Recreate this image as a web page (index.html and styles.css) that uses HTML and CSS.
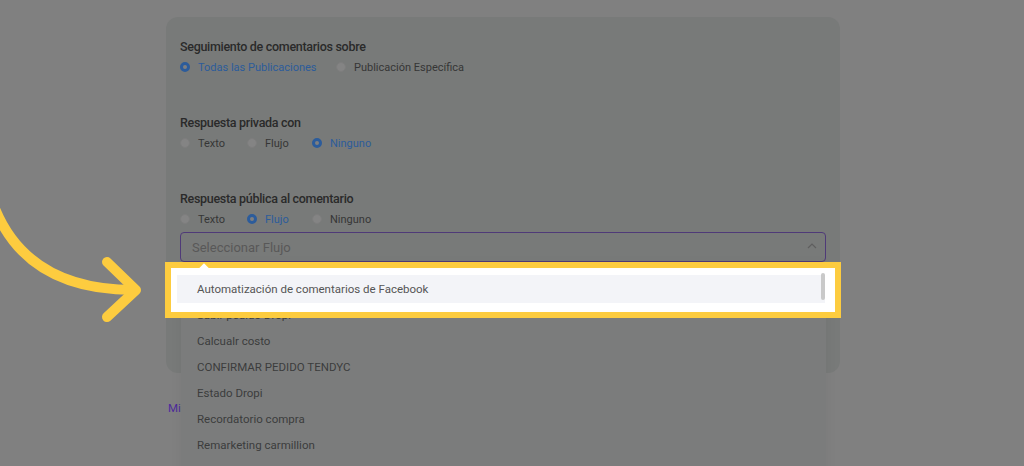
FILE: index.html
```html
<!DOCTYPE html>
<html lang="es">

<head>
    <meta charset="UTF-8">
    <meta name="viewport" content="width=device-width, initial-scale=1.0">
    <title>Respuesta a comentarios</title>
    <link rel="stylesheet" href="styles.css">
</head>

<body>
    <div class="comment-form">
        <div class="form-group">
            <div class="group-title">Seguimiento de comentarios sobre</div>
            <div class="radio-row">
                <span class="radio checked"><i></i>Todas las Publicaciones</span>
                <span class="radio wide"><i></i>Publicación Específica</span>
            </div>
        </div>

        <div class="form-group">
            <div class="group-title">Respuesta privada con</div>
            <div class="radio-row">
                <span class="radio"><i></i>Texto</span>
                <span class="radio"><i></i>Flujo</span>
                <span class="radio checked"><i></i>Ninguno</span>
            </div>
        </div>

        <div class="form-group last">
            <div class="group-title">Respuesta pública al comentario</div>
            <div class="radio-row">
                <span class="radio"><i></i>Texto</span>
                <span class="radio checked"><i></i>Flujo</span>
                <span class="radio"><i></i>Ninguno</span>
            </div>

            <div class="select-wrap">
                <div class="select-box">
                    <span>Seleccionar Flujo</span>
                    <svg class="chevron" width="10" height="6" viewBox="0 0 10 6">
                        <path d="M1 5 L5 1 L9 5" fill="none" stroke="#5f5f5f" stroke-width="1.2" />
                    </svg>
                </div>

                <ul class="flow-menu">
                    <li>Automatización de comentarios de Facebook</li>
                    <li>Subir pedido Dropi</li>
                    <li>Calcualr costo</li>
                    <li>CONFIRMAR PEDIDO TENDYC</li>
                    <li>Estado Dropi</li>
                    <li>Recordatorio compra</li>
                    <li>Remarketing carmillion</li>
                </ul>
            </div>
        </div>
    </div>

    <a href="#" class="flows-link">Mis flujos</a>

    <!-- tutorial highlight over the first option -->
    <div class="spotlight">
        <span class="notch"></span>
        <div class="spot-item">Automatización de comentarios de Facebook</div>
        <span class="scroll-thumb"></span>
    </div>

    <svg class="pointer-arrow" width="160" height="140" viewBox="0 190 160 140">
        <path d="M-12 188 C 8 262, 62 290, 134 290" fill="none" stroke="#fdcc3f" stroke-width="10"
            stroke-linecap="round" />
        <path d="M107 262 L136 290 L107 317" fill="none" stroke="#fdcc3f" stroke-width="10"
            stroke-linecap="round" stroke-linejoin="round" />
    </svg>
</body>

</html>
```

FILE: styles.css
```css
:root {
    --overlay: #808080;
    --card: #787a79;
    --menu: #7b7c7c;
    --text-dark: #2a2a2a;
    --text: #363636;
    --blue: #2c5c9b;
    --yellow: #fdcc3f;
}

* {
    box-sizing: border-box;
    margin: 0;
    padding: 0;
}

body {
    font-family: 'Roboto', 'Liberation Sans', sans-serif;
    background-color: var(--overlay);
    height: 466px;
    overflow: hidden;
    position: relative;
}

.comment-form {
    margin: 17px 0 0 166px;
    width: 674px;
    height: 356px;
    background-color: var(--card);
    border-radius: 12px;
    padding: 22px 14px;
}

.form-group {
    margin-bottom: 40px;
}

.group-title {
    font-size: 12.5px;
    font-weight: 500;
    letter-spacing: -0.3px;
    color: var(--text-dark);
    height: 16px;
    line-height: 16px;
}

.radio-row {
    display: flex;
    margin-top: 4px;
    height: 16px;
    align-items: center;
}

.radio {
    display: flex;
    align-items: center;
    font-size: 11px;
    color: var(--text);
    width: 65px;
}

.radio-row .radio:first-child {
    width: 67px;
}

.radio-row .radio.checked:first-child {
    width: 156px;
}

.radio.wide {
    width: auto;
}

.radio i {
    width: 10px;
    height: 10px;
    border-radius: 50%;
    background-color: #848484;
    border: 1px solid #7d7d7d;
    margin-right: 8px;
}

.radio.checked {
    color: var(--blue);
}

.radio.checked i {
    background-color: #7f7f7f;
    border: 3px solid var(--blue);
}

.select-wrap {
    position: relative;
    margin-top: 5px;
}

.select-box {
    height: 30px;
    border: 1px solid #4f3a78;
    border-radius: 4px;
    display: flex;
    align-items: center;
    justify-content: space-between;
    padding: 0 8px 0 11px;
    font-size: 13px;
    color: #585858;
}

.chevron {
    margin-top: -2px;
}

.flow-menu {
    list-style: none;
    position: absolute;
    top: 33px;
    left: 1px;
    right: 0;
    height: 240px;
    background-color: var(--menu);
    box-shadow: 0 0 12px rgba(0, 0, 0, 0.05);
    padding-top: 11px;
    z-index: 2;
}

.flow-menu li {
    height: 26px;
    line-height: 26px;
    padding-left: 16px;
    font-size: 11.5px;
    color: #3c3c3c;
}

.flows-link {
    display: block;
    width: 13px;
    overflow: hidden;
    white-space: nowrap;
    margin: 28px 0 0 168px;
    font-size: 11.5px;
    color: #4e2b9c;
    text-decoration: none;
}

.spotlight {
    position: absolute;
    left: 165px;
    top: 262px;
    width: 676px;
    height: 56px;
    border: 6px solid var(--yellow);
    background-color: #ffffff;
    z-index: 5;
}

.notch {
    position: absolute;
    left: 29px;
    top: -3px;
    width: 8px;
    height: 8px;
    background-color: #ffffff;
    transform: rotate(45deg);
}

.spot-item {
    margin: 7px 0 0 6px;
    width: 648px;
    height: 28px;
    line-height: 28px;
    padding-left: 20px;
    background-color: #f3f4f8;
    font-size: 11.5px;
    color: #555555;
}

.scroll-thumb {
    position: absolute;
    left: 650px;
    top: 5px;
    width: 4px;
    height: 27px;
    border-radius: 2px;
    background-color: #c9c9c9;
}

.pointer-arrow {
    position: absolute;
    left: 0;
    top: 190px;
    z-index: 6;
}
```
